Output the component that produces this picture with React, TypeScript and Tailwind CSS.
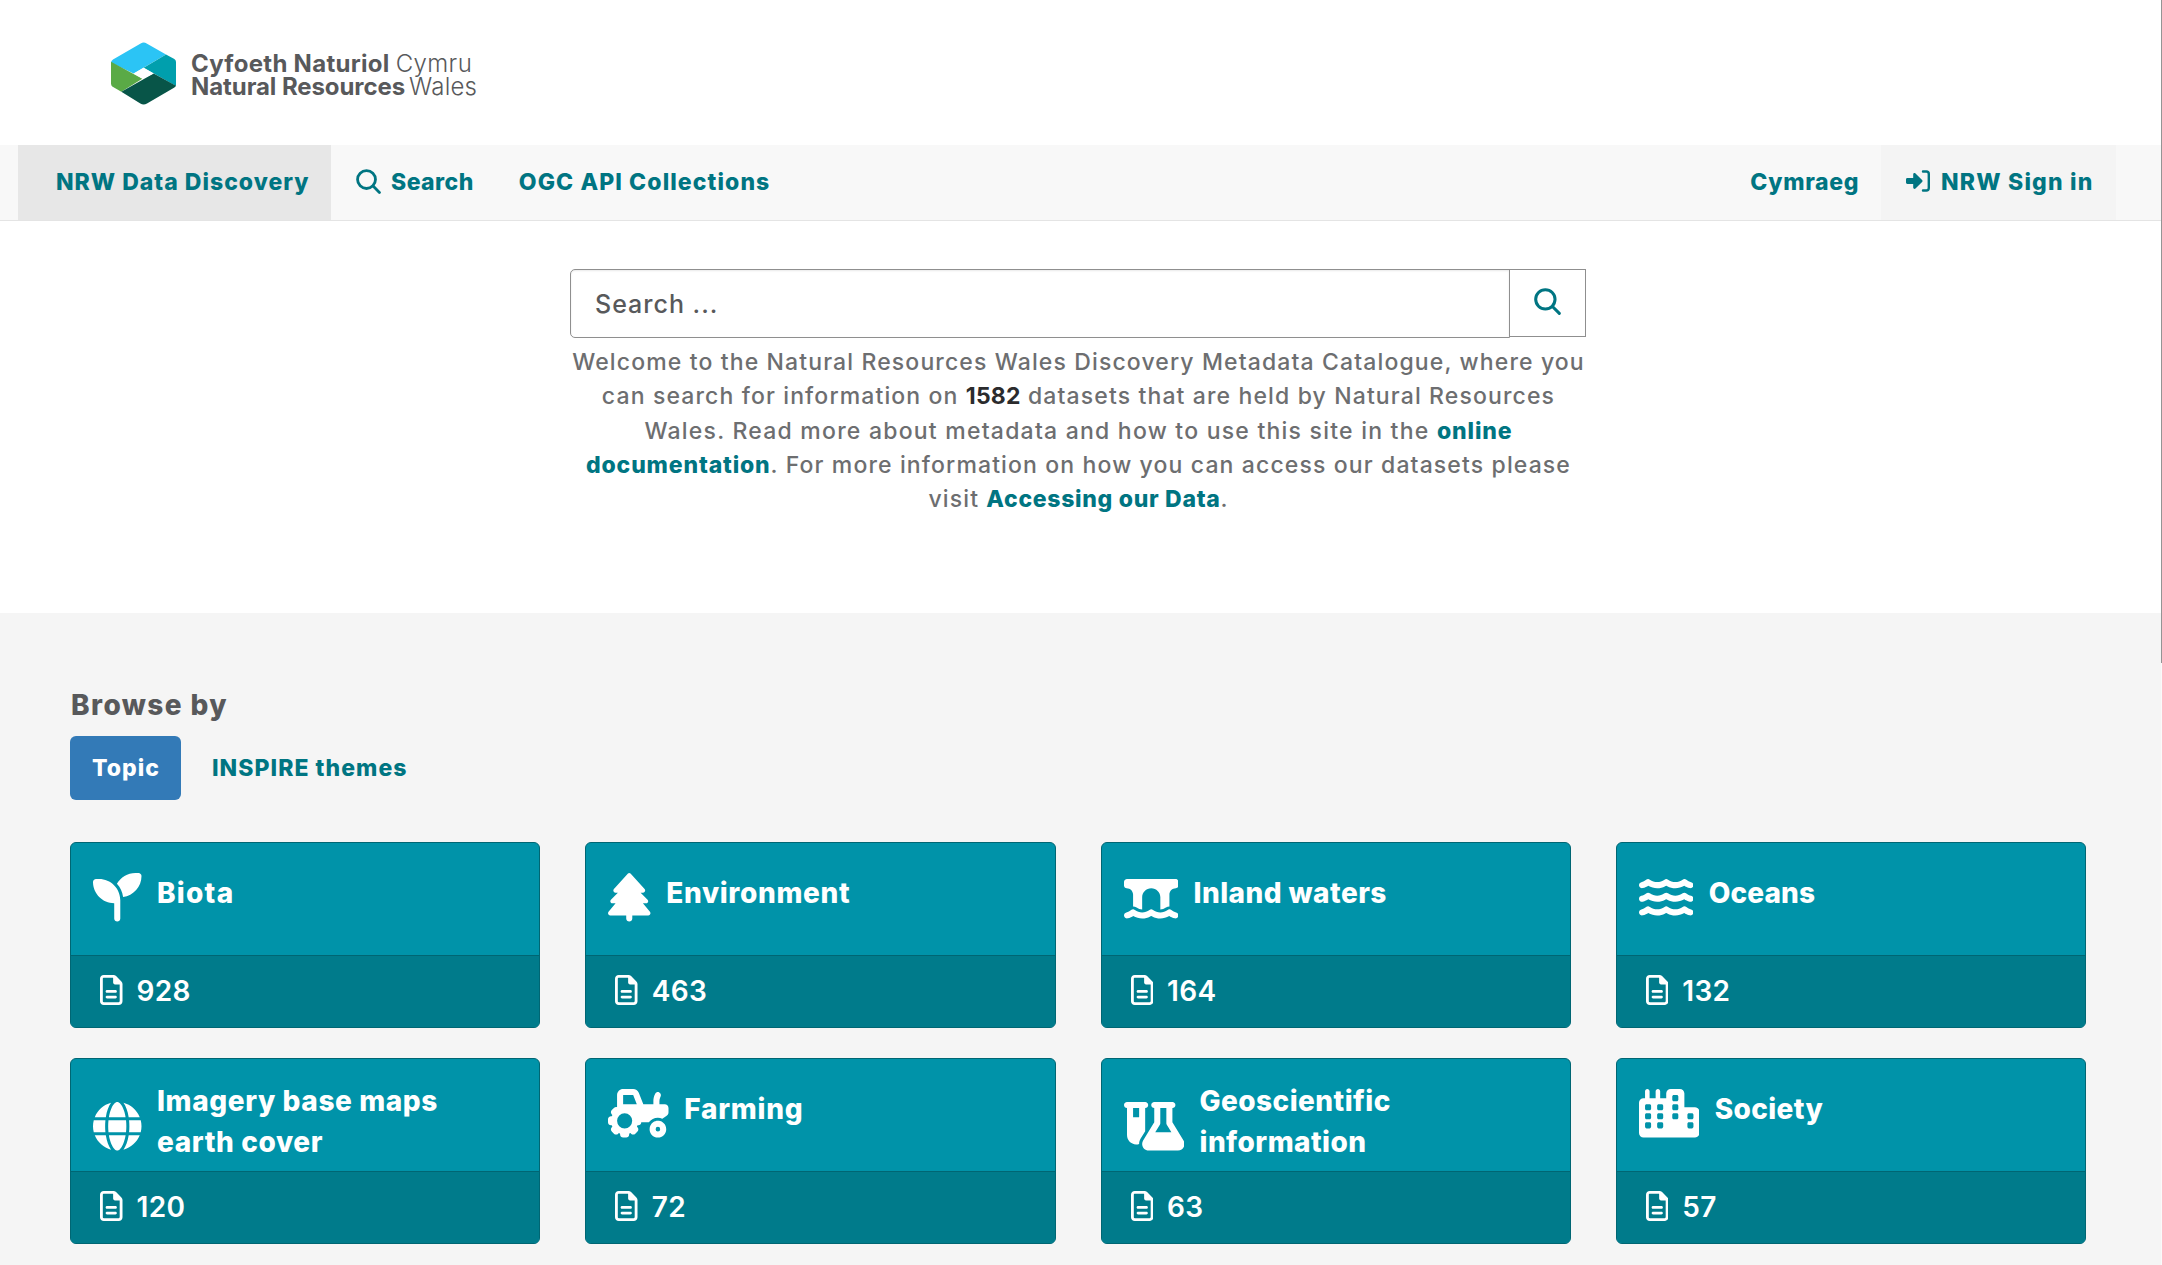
import type { IconType } from "react-icons";
import {
  FaBridgeWater,
  FaCity,
  FaFlaskVial,
  FaGlobe,
  FaRegFileLines,
  FaSeedling,
  FaTractor,
  FaTree,
  FaWater,
} from "react-icons/fa6";

type Topic = {
  lines: string[];
  count: number;
  icon: IconType;
  iconWidth: string;
  tracking: string;
};

const topics: Topic[] = [
  { lines: ["Biota"], count: 928, icon: FaSeedling, iconWidth: "w-[48.5px]", tracking: "tracking-[1.25px]" },
  { lines: ["Environment"], count: 463, icon: FaTree, iconWidth: "w-[42.5px]", tracking: "tracking-[0.65px]" },
  { lines: ["Inland waters"], count: 164, icon: FaBridgeWater, iconWidth: "w-[54.5px]", tracking: "tracking-[0.45px]" },
  { lines: ["Oceans"], count: 132, icon: FaWater, iconWidth: "w-[54.5px]", tracking: "tracking-[0.1px]" },
  { lines: ["Imagery base maps", "earth cover"], count: 120, icon: FaGlobe, iconWidth: "w-[48.5px]", tracking: "tracking-[0.6px]" },
  { lines: ["Farming"], count: 72, icon: FaTractor, iconWidth: "w-[60.5px]", tracking: "tracking-[0.75px]" },
  { lines: ["Geoscientific", "information"], count: 63, icon: FaFlaskVial, iconWidth: "w-[60.5px]", tracking: "tracking-[0.45px]" },
  { lines: ["Society"], count: 57, icon: FaCity, iconWidth: "w-[60.5px]", tracking: "tracking-[0.35px]" },
];

function SearchIcon({ className }: { className?: string }) {
  return (
    <svg viewBox="0 0 24 24" className={className} fill="none" stroke="currentColor" strokeWidth="2.7" strokeLinecap="round">
      <circle cx="10.1" cy="10.1" r="8.6" />
      <path d="M16.4 16.4 22.5 22.5" />
    </svg>
  );
}

function SignInIcon({ className }: { className?: string }) {
  return (
    <svg viewBox="0 0 24 22" className={className} fill="none">
      <path
        d="M1.4 8h5.8V4.4c0-1.2 1.4-1.8 2.3-1l6.6 6.6c.6.6.6 1.4 0 2l-6.600 6.600c-.9.8-2.300.2-2.300-1V14H1.400C.6 14 0 13.400 0 12.600V9.400C0 8.600.6 8 1.400 8Z"
        fill="currentColor"
      />
      <path d="M17 1.500h3.300a2.500 2.500 0 0 1 2.500 2.500v14a2.500 2.500 0 0 1-2.500 2.500H17" stroke="currentColor" strokeWidth="2.400" strokeLinecap="round" />
    </svg>
  );
}

function Logo() {
  return (
    <a href="#" className="flex text-2xl text-[#58595b]">
      <svg viewBox="333 68 195 187" className="h-[62.5px] w-[65px]">
        <path d="M333 130q0-6 6-10l83-48q9-6 18 0l58 33-97 57z" fill="#2bc4f5" />
        <path d="m498 105 25 14q5 3 5 9v72l-97-55z" fill="#009fad" />
        <path d="M333 127v66q0 6 5 9l26 15 63-39z" fill="#5aaa46" />
        <path d="m461 162 67 37q-1 3-6 6l-81 47q-10 6-20 0l-57-35z" fill="#085548" />
        <path d="m431 145 30 17-33 16-27-16z" fill="#fff" />
      </svg>
      <span className="ml-[15px] flex flex-col whitespace-nowrap pt-2.5 leading-[23px]">
        <span className="flex gap-[6px]">
          <b className="font-bold tracking-[0.3px]">Cyfoeth Naturiol</b>
          <span className="font-light tracking-[0.4px]">Cymru</span>
        </span>
        <span className="flex gap-[4px]">
          <b className="font-bold tracking-[-0.08px]">Natural Resources</b>
          <span className="font-light tracking-[0.2px]">Wales</span>
        </span>
      </span>
    </a>
  );
}

function Navbar() {
  return (
    <nav className="flex h-[76px] border-b border-[#e4e4e4] bg-[#f8f8f8] pl-[18px] text-[23px] font-extrabold tracking-[1px] whitespace-nowrap text-[#007582]">
      <a href="#" className="flex w-[313px] items-center bg-[#e7e7e7] pb-px pl-[38px]">
        NRW Data Discovery
      </a>
      <a href="#" className="ml-[25px] flex items-center pb-px">
        <SearchIcon className="mb-px size-[25px]" />
        <span className="ml-2.5 tracking-[0.45px]">Search</span>
      </a>
      <a href="#" className="ml-[45px] flex items-center pb-px tracking-[1.1px]">
        OGC API Collections
      </a>
      <a href="#" className="ml-auto flex items-center pb-px tracking-[0.65px]">
        Cymraeg
      </a>
      <a href="#" className="mr-[45px] ml-[22px] flex w-[235px] items-center bg-[#f4f4f4] pb-px pl-[25px]">
        <SignInIcon className="mb-0.5 h-[22px] w-6" />
        <span className="ml-[11px] tracking-[1.2px]">NRW Sign in</span>
      </a>
    </nav>
  );
}

function Intro() {
  return (
    <section className="flex h-[392px] flex-col pt-12 pl-[570px]">
      <div className="flex w-[1016px] items-start">
        <input
          placeholder="Search ..."
          className="h-[69px] w-[940px] rounded-l-[5px] border border-[#8f8f8f] bg-white pl-6 text-[25px] font-medium tracking-[1px] text-[#58595b] shadow-[inset_0_1px_2px_rgba(0,0,0,0.09)] placeholder:text-[#58595b] placeholder:opacity-100"
        />
        <button className="-ml-px flex h-[68px] w-[77px] items-center justify-center border border-[#8f8f8f] bg-white pb-[3px] text-[#007582]">
          <SearchIcon className="size-[27px]" />
        </button>
      </div>
      <p className="mt-[7px] w-[1017px] text-center text-[23px] leading-[34.25px] tracking-[1.13px] whitespace-nowrap text-[#6d6e70]">
        Welcome to the Natural Resources Wales Discovery Metadata Catalogue, where you
        <br />
        can search for information on <b className="font-bold tracking-[0.2px] text-[#2b2b2d]">1582</b> datasets that are held by Natural Resources
        <br />
        <span className="tracking-[1.23px]">Wales. Read more about metadata and how to use this site in the </span>
        <a href="#" className="font-extrabold tracking-[0.9px] text-[#007582]">online</a>
        <br />
        <a href="#" className="font-extrabold tracking-[0.85px] text-[#007582]">documentation</a>. For more information on how you can access our datasets please
        <br />
        visit <a href="#" className="font-extrabold tracking-[0.7px] text-[#007582]">Accessing our Data</a>.
      </p>
    </section>
  );
}

function TopicCard({ topic }: { topic: Topic }) {
  const Icon = topic.icon;
  const wrapped = topic.lines.length > 1;

  return (
    <a href="#" className="flex h-[186px] flex-col overflow-hidden rounded-md border border-[#006673] bg-[#0093a9] text-[28px] text-white">
      <div className={`flex h-28 items-start gap-[15.5px] pl-[22px] ${wrapped ? "pt-[22px]" : "pt-[30px]"}`}>
        <Icon className={`h-[48.5px] shrink-0 ${topic.iconWidth} ${wrapped ? "mt-[21px]" : ""}`} />
        <h3 className={`font-extrabold leading-[40.7px] whitespace-nowrap ${topic.tracking}`}>
          {topic.lines.map((line) => (
            <span key={line} className="block">{line}</span>
          ))}
        </h3>
      </div>
      <div className="flex flex-1 items-center gap-3.5 border-t border-[#006673] bg-[#007b8b] pl-[29px] font-semibold tracking-[0.35px]">
        <FaRegFileLines className="mb-[3px] h-[30px] w-[22.5px]" />
        <span className="mb-px">{topic.count}</span>
      </div>
    </a>
  );
}

function Browse() {
  return (
    <section className="flex-1 bg-[#f5f5f5] pt-[72px] pr-[75px] pl-[70px]">
      <h2 className="pl-px text-[28px] leading-[40px] font-extrabold tracking-[1.4px] text-[#58595b]">Browse by</h2>
      <div className="mt-[11px] flex h-16 items-center text-[23px] font-extrabold tracking-[1.05px]">
        <button className="h-16 w-[111px] rounded-md bg-[#337ab7] pl-px text-white">Topic</button>
        <button className="ml-[31px] text-[#007582]">INSPIRE themes</button>
      </div>
      <div className="mt-[42px] grid grid-cols-4 gap-x-[45px] gap-y-[30px]">
        {topics.map((topic) => (
          <TopicCard key={topic.lines[0]} topic={topic} />
        ))}
      </div>
    </section>
  );
}

export default function App() {
  return (
    <div className="flex h-[1265px] w-[2162px] overflow-hidden bg-white font-['Inter',sans-serif] font-medium">
      <main className="flex flex-1 flex-col">
        <header className="h-[145px] pt-[42px] pl-[111px]">
          <Logo />
        </header>
        <Navbar />
        <Intro />
        <Browse />
      </main>
      {/* scrollbar */}
      <div className="w-px bg-[#fafafa]">
        <div className="h-[663px] bg-[#949494]" />
      </div>
    </div>
  );
}
